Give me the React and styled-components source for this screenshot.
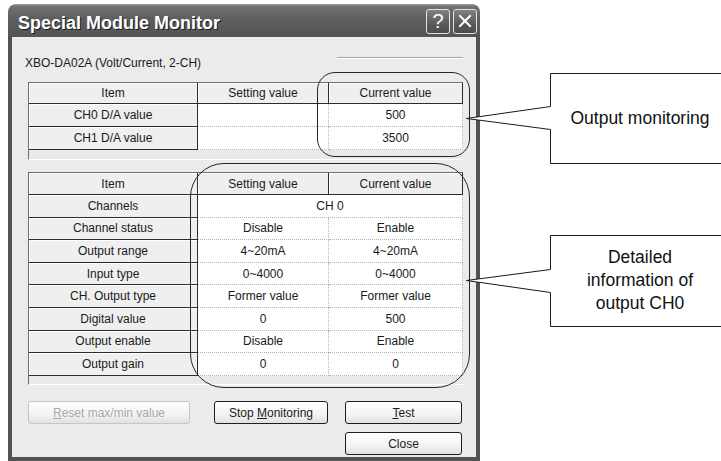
import React from 'react';
import styled, { createGlobalStyle } from 'styled-components';

const GlobalStyle = createGlobalStyle`
  html, body {
    margin: 0;
    padding: 0;
    background: #ffffff;
    overflow: hidden;
  }
  body {
    font-family: 'Liberation Sans', Arial, sans-serif;
  }
`;

const Stage = styled.div`
  position: relative;
  width: 721px;
  height: 461px;
  overflow: hidden;
  padding: 4px 0 0 8px;
  box-sizing: border-box;
`;

const Window = styled.div`
  width: 472px;
  height: 457px;
  display: flex;
  flex-direction: column;
`;

const TitleBar = styled.div`
  flex: none;
  height: 33px;
  box-sizing: border-box;
  border-radius: 8px 8px 0 0;
  background: linear-gradient(#a2a2a2 0, #727272 2px, #5e5e5e 45%, #545454 100%);
  display: flex;
  align-items: center;
  padding: 0 3px 0 10px;
`;

const Title = styled.div`
  flex: 1;
  color: #ffffff;
  font: bold 18px 'Liberation Sans', Arial, sans-serif;
  text-shadow: 1px 1px 0 #1c1c1c;
  padding-top: 5px;
`;

const CaptionButton = styled.div`
  width: 24px;
  height: 25px;
  margin: 1px 0 0 3px;
  box-sizing: border-box;
  border: 1px solid #e2e2e2;
  border-radius: 3px;
  background: linear-gradient(#808080, #5a5a5a 60%, #4c4c4c);
  display: flex;
  align-items: center;
  justify-content: center;
  color: #ffffff;
  font: 20px 'Liberation Sans', Arial, sans-serif;
`;

const Body = styled.div`
  flex: 1;
  background: #ebebeb;
  border: 4px solid #525252;
  border-top: none;
  padding: 18px 13px 0 16px;
  display: flex;
  flex-direction: column;
`;

const HeadRow = styled.div`
  display: flex;
  align-items: flex-start;
  height: 16px;
  margin-bottom: 11px;
`;

const ModuleName = styled.div`
  margin-left: -3px;
  font-size: 12px;
  line-height: 16px;
  color: #1a1a1a;
`;

const EtchedLine = styled.div`
  margin: 2px 0 0 auto;
  width: 126px;
  border-top: 1px solid #a8a8a8;
  border-bottom: 1px solid #ffffff;
`;

const Grid = styled.div`
  flex: none;
  width: 435px;
  height: ${p => p.$h}px;
  box-sizing: border-box;
  border-left: 1px solid #6e6e6e;
  border-top: 1px solid #6e6e6e;
  border-bottom: 1px solid #ffffff;
  background: #e9e9e9;
  margin-bottom: ${p => p.$mb || 0}px;
`;

const Row = styled.div`
  display: grid;
  grid-template-columns: 169px 131px 134px;
  height: ${p => p.$h}px;
`;

const HeadCell = styled.div`
  box-sizing: border-box;
  background: #efefef;
  border-right: 1px solid #2c2c2c;
  border-bottom: 1px solid #2c2c2c;
  box-shadow: inset 1px 1px 0 #ffffff;
  display: flex;
  align-items: center;
  justify-content: center;
  font-size: 12px;
  color: #1a1a1a;
`;

const Cell = styled.div`
  box-sizing: border-box;
  background: #ffffff;
  border-right: 1px dotted #b4b4b4;
  border-bottom: 1px dotted #b4b4b4;
  display: flex;
  align-items: center;
  justify-content: center;
  font-size: 12px;
  color: #1a1a1a;
  grid-column: span ${p => p.$span || 1};
`;

const ButtonRow = styled.div`
  display: flex;
  justify-content: ${p => (p.$end ? 'flex-end' : 'flex-start')};
  margin-top: ${p => p.$mt}px;
  padding-right: ${p => (p.$end ? 1 : 0)}px;
`;

const Button = styled.button`
  width: ${p => p.$w}px;
  height: 23px;
  padding: 0;
  box-sizing: border-box;
  border: 1px solid ${p => (p.disabled ? '#c6c6c6' : '#1e1e1e')};
  border-radius: 3px;
  background: linear-gradient(#ffffff, #f3f3f3 60%, #e1e1e1);
  font: 12px 'Liberation Sans', Arial, sans-serif;
  color: ${p => (p.disabled ? '#a8a8a8' : '#1a1a1a')};
  margin-left: ${p => p.$ml || 0}px;
  u {
    text-decoration: underline;
  }
`;

const Highlight = styled.div`
  position: absolute;
  left: ${p => p.$x}px;
  top: ${p => p.$y}px;
  width: ${p => p.$w}px;
  height: ${p => p.$h}px;
  box-sizing: border-box;
  border: 1.5px solid #262626;
  border-radius: ${p => p.$r}px;
  pointer-events: none;
`;

const CalloutShape = styled.svg`
  position: absolute;
  left: 460px;
  top: ${p => p.$y}px;
`;

const CalloutText = styled.div`
  position: absolute;
  left: 550px;
  top: ${p => p.$y}px;
  width: 180px;
  height: ${p => p.$h}px;
  display: flex;
  align-items: center;
  justify-content: center;
  text-align: center;
  font: 17.5px/23px 'Liberation Sans', Arial, sans-serif;
  color: #111;
`;

// the box runs off the right edge of the page, so its outline is left open there
function Callout({ top, bottom, baseA, baseB, tip, children }) {
  const h = bottom - top;
  const d = `M 300 0.5 H 90.5 V ${baseA - top + 0.5} L 6.5 ${tip - top + 0.5} L 90.5 ${baseB - top + 0.5} V ${h + 0.5} H 300`;
  return (
    <>
      <CalloutShape $y={top} width="320" height={h + 2}>
        <path d={d} fill="#ffffff" stroke="#1a1a1a" strokeWidth="1" />
      </CalloutShape>
      <CalloutText $y={top} $h={h}>{children}</CalloutText>
    </>
  );
}

const topRows = [
  ['CH0 D/A value', '', '500'],
  ['CH1 D/A value', '', '3500'],
];

const detailRows = [
  ['Channel status', 'Disable', 'Enable'],
  ['Output range', '4~20mA', '4~20mA'],
  ['Input type', '0~4000', '0~4000'],
  ['CH. Output type', 'Former value', 'Former value'],
  ['Digital value', '0', '500'],
  ['Output enable', 'Disable', 'Enable'],
  ['Output gain', '0', '0'],
];

export default function App() {
  return (
    <>
      <GlobalStyle />
      <Stage>
        <Window>
          <TitleBar>
            <Title>Special Module Monitor</Title>
            <CaptionButton>?</CaptionButton>
            <CaptionButton>
              <svg width="14" height="14" viewBox="0 0 14 14">
                <path d="M2 2 L12 12 M12 2 L2 12" stroke="#fff" strokeWidth="2" strokeLinecap="square" />
              </svg>
            </CaptionButton>
          </TitleBar>
          <Body>
            <HeadRow>
              <ModuleName>XBO-DA02A (Volt/Current, 2-CH)</ModuleName>
              <EtchedLine />
            </HeadRow>

            <Grid $h={78} $mb={12}>
              <Row $h={21}>
                <HeadCell>Item</HeadCell>
                <HeadCell>Setting value</HeadCell>
                <HeadCell>Current value</HeadCell>
              </Row>
              {topRows.map(r => (
                <Row $h={23} key={r[0]}>
                  <HeadCell>{r[0]}</HeadCell>
                  <Cell>{r[1]}</Cell>
                  <Cell>{r[2]}</Cell>
                </Row>
              ))}
            </Grid>

            <Grid $h={213}>
              <Row $h={22}>
                <HeadCell>Item</HeadCell>
                <HeadCell>Setting value</HeadCell>
                <HeadCell>Current value</HeadCell>
              </Row>
              <Row $h={22.6}>
                <HeadCell>Channels</HeadCell>
                <Cell $span={2}>CH 0</Cell>
              </Row>
              {detailRows.map(r => (
                <Row $h={22.6} key={r[0]}>
                  <HeadCell>{r[0]}</HeadCell>
                  <Cell>{r[1]}</Cell>
                  <Cell>{r[2]}</Cell>
                </Row>
              ))}
            </Grid>

            <ButtonRow $mt={16}>
              <Button $w={162} disabled>
                <u>R</u>eset max/min value
              </Button>
              <Button $w={114} $ml={24}>
                Stop <u>M</u>onitoring
              </Button>
              <Button $w={117} $ml={17}>
                <u>T</u>est
              </Button>
            </ButtonRow>
            <ButtonRow $mt={8} $end>
              <Button $w={117}>Close</Button>
            </ButtonRow>
          </Body>
        </Window>

        <Highlight $x={317} $y={72} $w={153} $h={85} $r={18} />
        <Highlight $x={190} $y={163} $w={280} $h={225} $r={34} />

        <Callout top={73} bottom={163} baseA={106} baseB={129} tip={118}>
          Output monitoring
        </Callout>
        <Callout top={235} bottom={326} baseA={269} baseB={292} tip={280}>
          Detailed
          <br />
          information of
          <br />
          output CH0
        </Callout>
      </Stage>
    </>
  );
}
